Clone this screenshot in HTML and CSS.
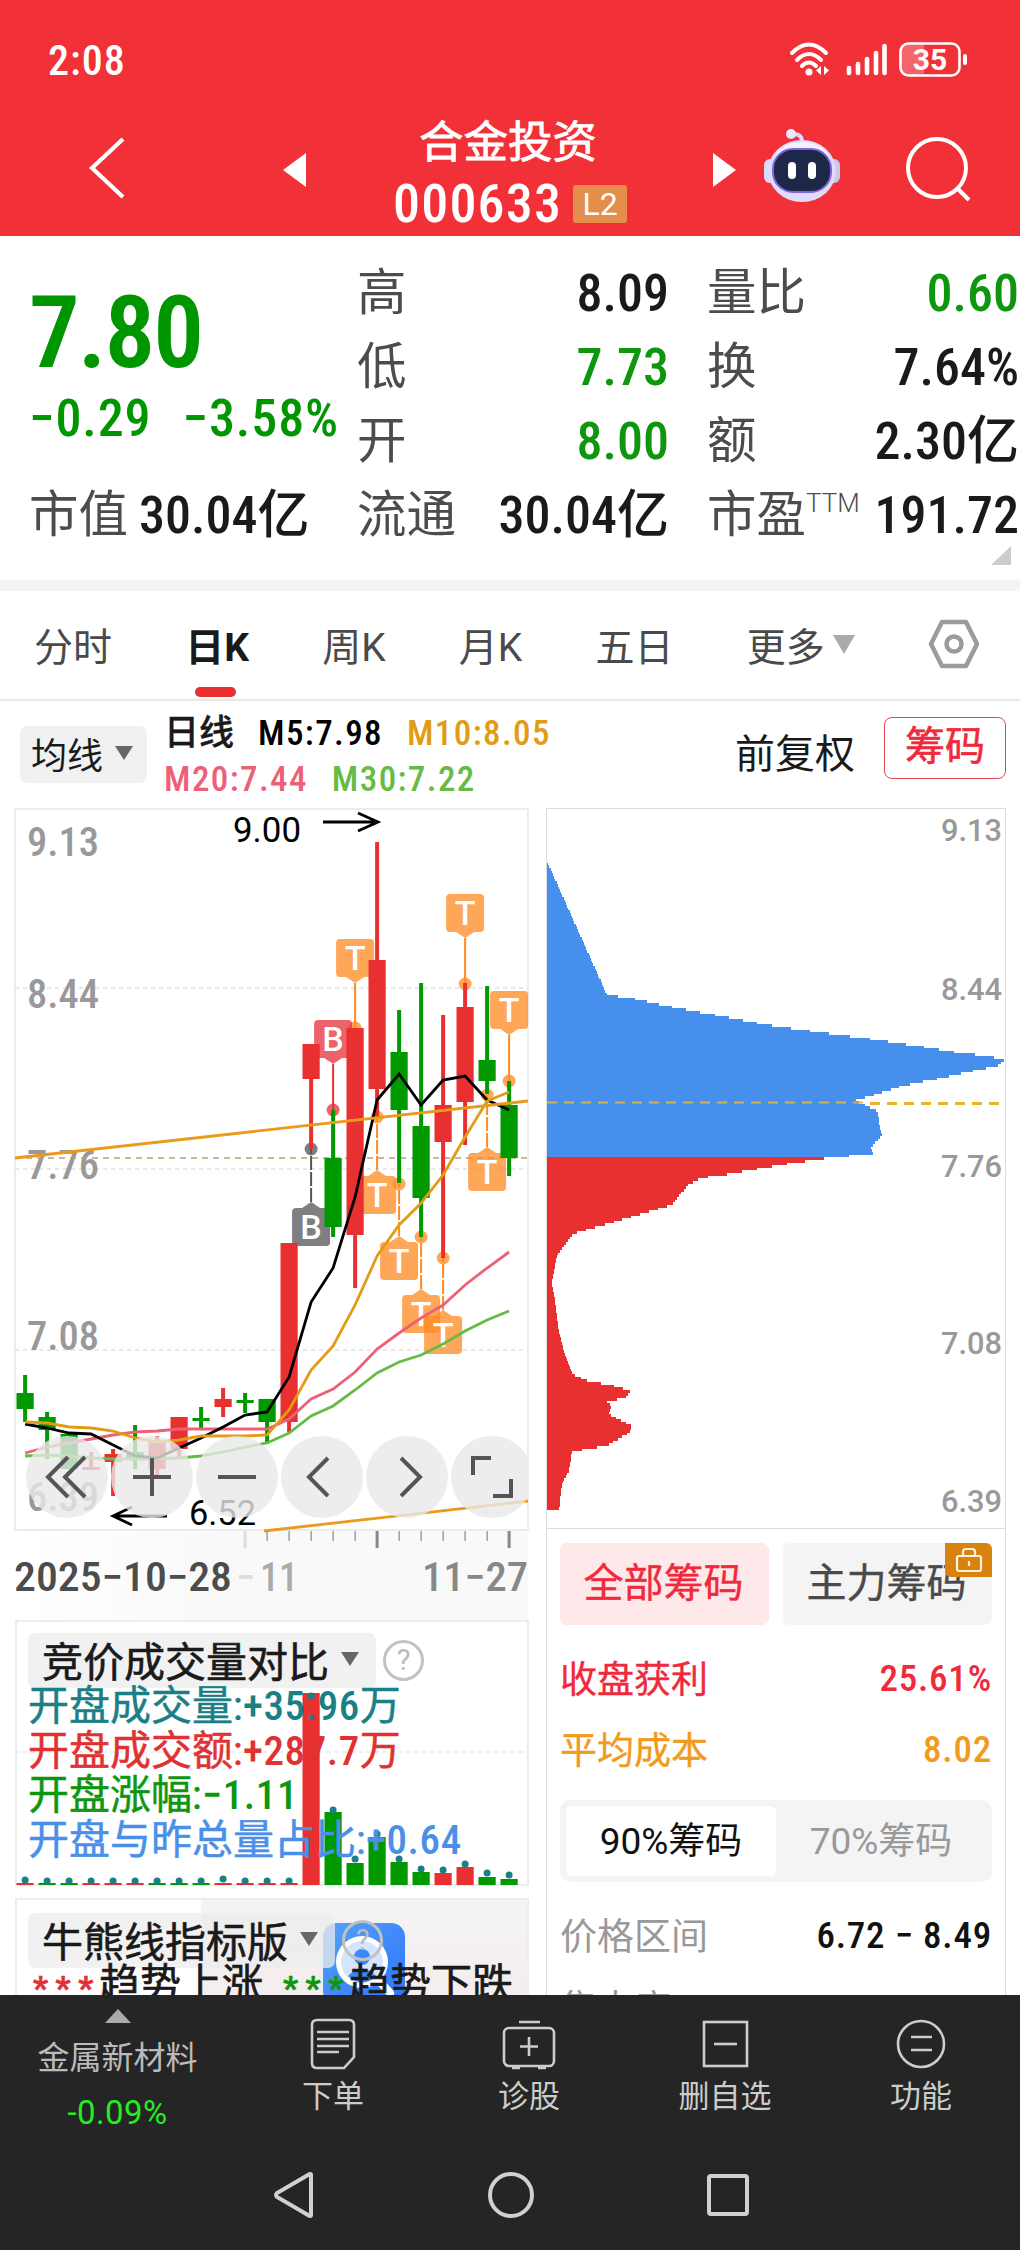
FILE: index.html
```
<!DOCTYPE html>
<html lang="zh-CN">
    <head>
        <title>合金投资 000633</title>
        <meta charset="UTF-8">
        <meta name="viewport" content="width=device-width, initial-scale=1.0">
        <link rel="stylesheet" href="styles.css">
    </head>
    <body>
        <div class="phone">
            <header class="header">
                <div class="statusbar">
                    <span class="clock">2:08</span>
                    <div class="status-icons">
                        <svg width="42" height="36" viewBox="0 0 42 36" fill="none" stroke="#fff" stroke-width="4" stroke-linecap="round">
                            <path d="M3 11Q20 -6 37 11M8 18Q20 6 32 18M13 24Q20 17 27 24"/>
                            <circle cx="20" cy="30" r="3.5" fill="#fff" stroke="none"/>
                            <path d="M32 24v9l-5-4.500zM35 24v9l5-4.500z" fill="#fff" stroke="none"/>
                        </svg>
                        <svg width="42" height="36" viewBox="0 0 42 36" stroke="#fff" stroke-width="4.600" stroke-linecap="round">
                            <path d="M3 26v5M12 22v9M21 17v14M30 11v20M38.500 4v27"/>
                        </svg>
                        <svg width="70" height="36" viewBox="0 0 70 36">
                            <path d="M9 1.500h16v32h-16q-7 0-7-7v-18q0-7 7-7z" fill="#fff" opacity=".25"/>
                            <rect x="1.500" y="1.500" width="59" height="32" rx="8" fill="none" stroke="#fff" stroke-width="2.600"/>
                            <rect x="64" y="12" width="4" height="11" rx="2" fill="#fff"/>
                            <text x="31" y="28" class="battery" text-anchor="middle">35</text>
                        </svg>
                    </div>
                </div>
                <div class="titlebar">
                    <svg class="back" width="40" height="62" viewBox="0 0 40 62"><path d="M35 2L4 31L35 60" fill="none" stroke="#fff" stroke-width="4.200"/></svg>
                    <svg class="prev" width="23" height="34" viewBox="0 0 23 34"><path d="M0 17L23 0V34z" fill="#fff"/></svg>
                    <div class="title">
                        <div class="stock-name">合金投资</div>
                        <div class="stock-code"><span class="code">000633</span><span class="level">L2</span></div>
                    </div>
                    <svg class="next" width="23" height="34" viewBox="0 0 23 34"><path d="M23 17L0 0V34z" fill="#fff"/></svg>
                    <svg class="robot" width="78" height="76" viewBox="0 0 78 76">
                        <path d="M29 6Q40 5 39 16" fill="none" stroke="#dcd6fb" stroke-width="4"/>
                        <circle cx="28" cy="6" r="5" fill="#ece9ff"/>
                        <rect x="1" y="31" width="12" height="24" rx="6" fill="#dcdafa"/>
                        <rect x="65" y="31" width="12" height="24" rx="6" fill="#c9c5f2"/>
                        <ellipse cx="39" cy="43" rx="34" ry="31" fill="#dedcfa"/>
                        <ellipse cx="39" cy="34" rx="28" ry="20" fill="#f3f1ff"/>
                        <rect x="10" y="21" width="58" height="43" rx="20" fill="#1d2747" stroke="#7f63d8" stroke-width="2"/>
                        <rect x="25" y="34" width="8" height="17" rx="4" fill="#fff"/>
                        <rect x="45" y="34" width="8" height="17" rx="4" fill="#fff"/>
                    </svg>
                    <svg class="search" width="68" height="68" viewBox="0 0 68 68" fill="none" stroke="#fff" stroke-width="4"><circle cx="33" cy="33" r="29"/><path d="M53 53L65 65"/></svg>
                </div>
            </header>

            <section class="quote">
                <div class="price-block">
                    <div class="price">7.80</div>
                    <div class="change"><span class="n">−0.29</span><span class="n">−3.58%</span></div>
                </div>
                <div class="cell"><label>高</label><b class="n">8.09</b></div>
                <div class="cell"><label>量比</label><b class="n green">0.60</b></div>
                <div class="cell"><label>低</label><b class="n green">7.73</b></div>
                <div class="cell"><label>换</label><b class="n">7.64%</b></div>
                <div class="cell"><label>开</label><b class="n green">8.00</b></div>
                <div class="cell"><label>额</label><b><span class="n">2.30</span>亿</b></div>
                <div class="cell first"><label>市值</label><b><span class="n">30.04</span>亿</b></div>
                <div class="cell"><label>流通</label><b><span class="n">30.04</span>亿</b></div>
                <div class="cell"><label>市盈<sup>TTM</sup></label><b class="n">191.72</b></div>
                <i class="corner"></i>
            </section>

            <nav class="tabs">
                <span>分时</span>
                <span class="on">日K</span>
                <span>周K</span>
                <span>月K</span>
                <span>五日</span>
                <span class="more">更多<i class="caret"></i></span>
                <svg width="52" height="50" viewBox="0 0 52 50" fill="none" stroke="#9b9b9b" stroke-width="4.500" stroke-linejoin="round"><path d="M14 3H38L49 25L38 47H14L3 25z"/><circle cx="26" cy="25" r="7.500"/></svg>
            </nav>

            <div class="ma-bar">
                <div class="chip ma-chip">均线<i class="caret dark"></i></div>
                <div class="ma-list">
                    <div class="ma-row"><span class="ma-name">日线</span><span class="ma m5">M5:7.98</span><span class="ma m10">M10:8.05</span></div>
                    <div class="ma-row"><span class="ma m20">M20:7.44</span><span class="ma m30">M30:7.22</span></div>
                </div>
                <span class="adjust">前复权</span>
                <span class="chips-btn">筹码</span>
            </div>

            <main class="main">
                <div class="left">
                    <div class="kline">
                        <svg id="kline" width="529" height="812" viewBox="0 808 529 812"></svg>
                        <div class="tools">
                            <button><svg viewBox="0 0 82 82"><path d="M42 21L22 41L42 61M59 21L39 41L59 61"/></svg></button>
                            <button><svg viewBox="0 0 82 82"><path d="M22 41H60M41 22V60"/></svg></button>
                            <button><svg viewBox="0 0 82 82"><path d="M22 41H60"/></svg></button>
                            <button><svg viewBox="0 0 82 82"><path d="M47 22L28 41L47 60"/></svg></button>
                            <button><svg viewBox="0 0 82 82"><path d="M35 22L54 41L35 60"/></svg></button>
                            <button><svg viewBox="0 0 82 82"><path d="M40 22H22V39M60 43V60H42"/></svg></button>
                        </div>
                    </div>
                    <div class="panel volume">
                        <svg id="volume" class="under" width="514" height="266" viewBox="15 1620 514 266"></svg>
                        <div class="panel-head"><div class="chip">竞价成交量对比<i class="caret dark"></i></div><i class="help">?</i></div>
                        <p class="teal">开盘成交量:<span>+35.96</span>万</p>
                        <p class="red">开盘成交额:<span>+287.7</span>万</p>
                        <p class="green">开盘涨幅:<span>−1.11</span></p>
                        <p class="blue">开盘与昨总量占比:<span>+0.64</span></p>
                    </div>
                    <div class="panel trend">
                        <div class="shade"></div>
                        <svg class="finder" width="82" height="82" viewBox="0 0 82 82">
                            <defs><linearGradient id="fg" x2="1" y2="1"><stop offset="0" stop-color="#57a2fb"/><stop offset="1" stop-color="#2d72f8"/></linearGradient></defs>
                            <rect width="82" height="82" rx="14" fill="url(#fg)"/>
                            <path d="M58 60L67 70" stroke="#fff" stroke-width="8" stroke-linecap="round"/>
                            <circle cx="39" cy="39" r="26" fill="#fff"/>
                            <circle cx="39" cy="39" r="21" fill="#d5e5fd"/>
                            <circle cx="39" cy="34" r="8" fill="#3d86fb"/>
                            <path d="M25 53Q39 38 53 53Q39 66 25 53" fill="#3d86fb"/>
                        </svg>
                        <div class="panel-head"><div class="chip">牛熊线指标版<i class="caret dark"></i></div><i class="help">?</i></div>
                        <div class="legend"><span class="stars red">***</span>趋势上涨<span class="stars green">***</span>趋势下跌</div>
                    </div>
                </div>

                <div class="right">
                    <svg id="profile" width="458" height="719" viewBox="547 809 458 719"></svg>
                    <div class="holders">
                        <div class="btns">
                            <span class="btn on">全部筹码</span>
                            <span class="btn">主力筹码
                                <i class="lock"><svg width="28" height="28" viewBox="0 0 28 28" fill="none" stroke="#fff3d9" stroke-width="2.200"><rect x="2" y="10" width="24" height="15" rx="2"/><path d="M8 10V6q0-3 3-3h6q3 0 3 3v4M14 15v5"/></svg></i>
                            </span>
                        </div>
                        <div class="row hot"><span>收盘获利</span><b>25.61%</b></div>
                        <div class="row warm"><span>平均成本</span><b>8.02</b></div>
                        <div class="segment"><span class="on">90%筹码</span><span>70%筹码</span></div>
                        <div class="row"><span>价格区间</span><b>6.72 − 8.49</b></div>
                        <div class="row last"><span>集中度</span><b>11.64%</b></div>
                    </div>
                </div>
            </main>

            <footer class="footer">
                <div class="actions">
                    <div class="sector"><i class="up"></i><span>金属新材料</span><b>-0.09%</b></div>
                    <div class="action">
                        <svg width="54" height="54" viewBox="0 0 54 54"><path d="M11 3H43Q48 3 48 8V40L38 51H11Q6 51 6 46V8Q6 3 11 3zM11 15H43M11 22H43M11 29H43M11 35H33"/></svg>
                        <span>下单</span>
                    </div>
                    <div class="action">
                        <svg width="54" height="54" viewBox="0 0 54 54"><rect x="2" y="11" width="50" height="38" rx="5"/><path d="M17 5H38M10 51H18M36 51H44M27 20V39M18 29.500H36"/></svg>
                        <span>诊股</span>
                    </div>
                    <div class="action">
                        <svg width="54" height="54" viewBox="0 0 54 54"><rect x="6" y="5" width="43" height="44"/><path d="M16 27H39"/></svg>
                        <span>删自选</span>
                    </div>
                    <div class="action">
                        <svg width="54" height="54" viewBox="0 0 54 54"><circle cx="27" cy="27" r="23"/><path d="M17 20H38M17 33H38"/></svg>
                        <span>功能</span>
                    </div>
                </div>
                <div class="sysnav">
                    <svg width="48" height="48" viewBox="0 0 48 48"><path d="M41 4V44Q41 46 38 44L7 26Q5 24 7 22L38 4Q41 2 41 4z"/></svg>
                    <svg width="48" height="48" viewBox="0 0 48 48"><circle cx="24" cy="24" r="21"/></svg>
                    <svg width="48" height="48" viewBox="0 0 48 48"><rect x="5" y="5" width="38" height="38" rx="2"/></svg>
                </div>
            </footer>
        </div>
        <script src="script.js"></script>
    </body>
</html>
```
FILE: styles.css
```
*{box-sizing:border-box;}

body{
    margin:0;
    background:#fff;
    font-family:Roboto, "Noto Sans CJK SC", sans-serif;
    color:#1a1a1a;
}

i{font-style:normal;}
b{font-weight:500;}
p{margin:0;}
svg{display:block; flex:none;}

.phone{
    width:1020px; height:2250px;
    overflow:hidden;
    display:flex;
    flex-direction:column;
}

.n{font-stretch:87%;}

.green{color:#0f960f;}
.red{color:#e03232;}

/* header */
.header{height:236px; flex:none; background:#f13038; color:#fff;}

.statusbar{
    display:flex;
    justify-content:space-between;
    align-items:center;
    height:84px;
    padding:36px 51px 0 48px;
}

.clock{font-size:42px; font-weight:500; font-stretch:87%; letter-spacing:1px;}
.status-icons{display:flex; gap:15px;}
.status-icons svg:last-child{margin-left:-4px;}
.battery{font-size:30px; font-weight:700; fill:#fff;}

.titlebar{display:flex; align-items:flex-start; height:152px;}
.back{margin:53px 0 0 88px;}
.prev{margin:69px 0 0 155px;}
.title{width:300px; margin:28px 0 0 54px;}
.next{margin:69px 0 0 53px;}
.robot{margin:44px 0 0 27px;}
.search{margin:51px 0 0 63px;}

.stock-name{
    padding-left:59px;
    font-size:44.500px; line-height:62px;
    -webkit-text-stroke:.8px #fff;
}

.stock-code{
    display:flex;
    align-items:center;
    gap:12px;
    padding-left:33px;
    font-size:54px; line-height:60px;
    font-weight:500;
}

.code{width:168px; font-stretch:87%; letter-spacing:1.200px;}

.level{
    width:54px; height:38px;
    background:#e38e4b;
    font-size:32px; line-height:38px;
    font-weight:400;
    text-align:center;
    border-radius:3px;
}

/* quote */
.quote{
    position:relative;
    height:355px;
    flex:none;
    display:grid;
    grid-template-columns:290px 312px 312px;
    grid-template-rows:repeat(4, 74px);
    column-gap:38px;
    padding:20px 1px 0 29px;
    border-bottom:11px solid #f4f4f4;
}

.price-block{grid-row:1 / 4; color:#009600;}
.price{font-size:101px; line-height:120px; margin-top:17px; font-weight:600; font-stretch:87%; letter-spacing:-2px;}
.change{display:flex; gap:31px; font-size:52px; line-height:52px; font-weight:500; letter-spacing:.900px; white-space:nowrap;}
.cell{display:flex; justify-content:space-between; align-items:center; font-size:49.500px; line-height:74px; white-space:nowrap;}
.cell label{color:#4c4c4c;}
.cell b{font-size:52px; padding-top:2px;}
.cell.first{justify-content:flex-start; gap:11px;}
.cell sup{font-size:26px; line-height:0; vertical-align:20px; font-weight:300;}

.corner{
    position:absolute;
    right:9px; bottom:15px;
    border-left:20px solid transparent;
    border-bottom:19px solid #ccc;
}

/* tabs */
.tabs{
    display:flex;
    align-items:center;
    height:110px;
    flex:none;
    padding:0 40px 2px 34px;
    justify-content:space-between;
    border-bottom:2px solid #e8e8e8;
    font-size:39px;
    color:#4a4a4a;
}

.tabs .on{position:relative; color:#1a1a1a; font-weight:700;}

.tabs .on::after{
    content:"";
    position:absolute;
    left:10px; bottom:-25px;
    width:41px; height:10px;
    border-radius:5px;
    background:#e83030;
}

.caret{
    display:inline-block;
    border:11px solid transparent;
    border-top:19px solid #aaa;
    border-bottom:0;
}

.more{display:flex; align-items:center; gap:8px;}

.caret.dark{border-width:14px 9.500px 0; border-top-color:#666;}

/* moving averages */
.ma-bar{display:flex; align-items:center; height:107px; flex:none; padding:0 14px 0 20px;}

.chip{
    display:flex;
    align-items:center;
    gap:12px;
    border-radius:7px;
    background:rgba(236,236,236,.75);
}

.ma-chip{width:127px; height:57px; padding:0 0 3px 11px; font-size:36px;}
.ma-list{padding:4px 0 0 17px; font-size:35px; font-weight:500; line-height:46px;}
.ma-row{display:flex; gap:24px;}
.ma{font-stretch:87%; letter-spacing:1.400px;}
.ma-name{-webkit-text-stroke:.4px #1a1a1a;}
.m5{color:#000;}
.m10{color:#e29c14;}
.m20{color:#ee6078;}
.m30{color:#66bb45;}
.adjust{margin:-7px 29px 0 auto; font-size:40px;}

.chips-btn{
    width:122px; height:62px;
    margin-top:-14px;
    border:1.500px solid #e04450;
    border-radius:8px;
    color:#f02a3c;
    font-size:40px; line-height:58px;
    text-align:center;
    -webkit-text-stroke:.6px #f02a3c;
}

/* charts */
.main{display:flex; height:1187px; flex:none; overflow:hidden;}
.left{width:546px; flex:none;}
.kline{position:relative; width:529px; height:812px;}

.tools{
    position:absolute;
    left:26px; top:628px;
    width:502px;
    display:flex;
    gap:3px;
    overflow:hidden;
}

.tools button{
    width:82px; height:82px;
    flex:none;
    padding:0;
    border:0;
    border-radius:50%;
    background:rgba(232,232,232,.8);
}

.tools svg{fill:none; stroke:#555; stroke-width:4;}

.axis-label{font-size:40px; font-weight:500; font-stretch:87%; fill:#999;}
.side-label{font-size:32px; font-weight:500; fill:#999;}
.mark{font-size:35px; font-weight:400; fill:#000;}
.flag{font-size:34px; font-weight:500; fill:#fff;}

.panel{position:relative; width:514px; margin-left:15px; border:2px solid #ededed;}
.volume{height:266px; padding-top:11px;}
.under{position:absolute; left:-2px; top:-2px;}
.panel-head{position:relative; display:flex; align-items:center; gap:7px; margin-left:11px;}

.panel-head .chip{
    height:55px;
    padding:0 17px 4px 14px;
    font-size:41px;
    -webkit-text-stroke:.6px #1a1a1a;
}

.help{
    width:41px; height:41px;
    border:3px solid #c2c2c2;
    border-radius:50%;
    color:#bbb;
    font-size:29px; line-height:35px;
    text-align:center;
}

.volume p{
    position:relative;
    margin-left:11px;
    font-size:41px; line-height:44.700px;
    white-space:nowrap;
    -webkit-text-stroke:.5px currentColor;
}

.volume p:nth-of-type(1){margin-top:-4px;}
.volume p span{font-weight:500; font-stretch:87%; letter-spacing:.600px; -webkit-text-stroke:0;}
.teal{color:#1b7f86;}
.blue{color:#4a8fe8;}

.trend{height:130px; margin-top:12px; padding-top:13px;}

.shade{
    position:absolute;
    left:184px; top:0; right:0; bottom:0;
    background:linear-gradient(#f4f4f4, #f5eaec);
}

.finder{position:absolute; left:306px; top:23px;}

.legend{
    position:relative;
    display:flex;
    margin-left:16px;
    font-size:41px; line-height:44px;
    margin-top:-6px;
    white-space:nowrap;
    -webkit-text-stroke:.7px currentColor;
}

.stars{width:66px; font-size:34px; font-weight:500; letter-spacing:7.500px; line-height:52px; height:44px;}
.stars.green{margin-left:20px;}

/* chip distribution */
.right{width:460px; height:1240px; border:1px solid #ddd;}
.holders{border-top:1px solid #ddd; padding:14px 13px 0; font-size:37px;}
.btns{display:flex; gap:14px;}

.btn{
    position:relative;
    width:209px; height:82px;
    padding-right:2px;
    border-radius:7px;
    background:#f4f4f4;
    color:#4a4a4a;
    font-size:40px; line-height:81px;
    text-align:center;
    -webkit-text-stroke:.4px currentColor;
}

.btn.on{background:#ffe8e9; color:#f02a3c;}

.lock{
    position:absolute;
    right:0; top:0;
    width:47px; height:34px;
    padding:3px 10px;
    border-radius:0 6px 0 6px;
    background:#d9820f;
}

.row{display:flex; justify-content:space-between; align-items:center; height:71px; color:#999; white-space:nowrap;}
.row b{padding-top:3px; color:#111; font-stretch:87%; letter-spacing:.800px;}
.hot{margin-top:16px;}
.hot, .hot b{color:#f02a3c;}
.warm, .warm b{color:#f29a1b;}
.hot span, .warm span{-webkit-text-stroke:.4px currentColor;}
.row.last{margin-top:1px;}
.row.last b{padding-top:9px;}

.segment{
    display:flex;
    height:82px;
    margin:17px 0 16px;
    padding:6px;
    border-radius:10px;
    background:#f4f4f4;
    color:#999;
}

.segment span{flex:1; line-height:71px; text-align:center;}
.segment .on{background:#fff; border-radius:6px; color:#111;}

/* footer */
.footer{flex:1; background:#252525; color:#ccc;}
.actions{display:flex; height:146px;}
.sector{width:235px; display:flex; flex-direction:column; align-items:center; padding-top:14px; color:#bbb; font-size:32px;}
.sector span{line-height:50px; margin-top:10px;}
.sector b{color:#22ee22; font-weight:400; font-size:33px; line-height:50px; margin-top:5px; letter-spacing:.400px;}
.up{border:13px solid transparent; border-bottom:14px solid #aaa; border-top:0;}
.action{width:196px; display:flex; flex-direction:column; align-items:center; padding-top:22px; font-size:31px; line-height:52px;}
.action svg{fill:none; stroke:#ccc; stroke-width:2.600;}
.sysnav{display:flex; padding:30px 0 0 270px; gap:169px;}
.sysnav svg{fill:none; stroke:#d0d0d0; stroke-width:4;}
```
FILE: script.js
```
var UP = "#e83030";
var DOWN = "#009900";
var STEP = 22;

// colour, high, body top, body bottom, low
var candles = [
    ["g",1375,1393,1409,1422], ["g",1412,1417,1430,1459], ["g",1432,1434,1469,1469],
    ["r",1452,1467,1470,1470], ["r",1449,1454,1462,1496], ["g",1425,1452,1460,1469],
    ["r",1436,1441,1469,1477], ["r",1417,1417,1449,1457], ["g",1407,1418,1421,1428],
    ["r",1388,1399,1407,1417], ["g",1393,1400,1403,1413], ["g",1399,1399,1422,1443],
    ["r",1243,1243,1422,1432], ["r",1044,1044,1079,1149], ["g",1110,1158,1227,1237],
    ["r",1028,1028,1235,1288], ["r",842,960,1089,1117], ["g",1010,1052,1110,1183],
    ["g",983,1126,1198,1237], ["r",1015,1105,1142,1258], ["r",983,1007,1102,1145],
    ["g",986,1060,1081,1094], ["g",1081,1105,1158,1176]
];

// candle index, letter, colour, box top, dot
var flags = [
    [15,"T","#ff8a22",939,1028], [14,"B","#e83038",1020,1110], [20,"T","#ff8a22",894,984],
    [22,"T","#ff8a22",991,1081], [13,"B","#555555",1208,1149], [16,"T","#ff8a22",1176,1117],
    [17,"T","#ff8a22",1242,1184], [18,"T","#ff8a22",1295,1237], [19,"T","#ff8a22",1316,1258],
    [21,"T","#ff8a22",1153,1095]
];

var averages = {
    "#ee6078": [1453,1447,1443,1439,1435,1432,1431,1429,1429,1429,1429,1429,1419,1399,1389,1372,1349,1333,1318,1305,1285,1268,1252],
    "#66bb45": [1456,1455,1456,1458,1459,1459,1459,1458,1456,1452,1447,1443,1433,1416,1406,1390,1373,1362,1355,1344,1331,1320,1311],
    "#000000": [1424,1428,1433,1434,1445,1456,1458,1448,1438,1427,1415,1412,1377,1302,1268,1197,1100,1074,1105,1080,1076,1100,1110],
    "#e29c14": [1422,1423,1427,1428,1431,1438,1442,1440,1436,1436,1436,1435,1410,1370,1346,1305,1256,1225,1203,1175,1137,1101,1092]
};

// colour, bar top, dot
var volumes = [
    ["r",1883,1880], ["g",1883,1881], ["g",1883,1881], ["r",1883,1881], ["r",1883,1881],
    ["r",1883,1881], ["g",1883,1881], ["g",1883,1881], ["g",1883,1881], ["r",1883,1879],
    ["r",1883,1881], ["r",1883,1881], ["r",1883,1881], ["r",1693,1696], ["g",1812,1810],
    ["g",1863,1859], ["g",1837,1834], ["g",1862,1859], ["g",1872,1869], ["r",1873,1870],
    ["r",1867,1864], ["g",1877,1873], ["g",1879,1875]
];

// outline of the chip distribution: price position, width
var outline = [
    [860,0], [993.5,60], [997,84], [1006,126], [1016,180], [1024,223], [1031,273], [1038,326],
    [1046,380], [1051,408], [1055,441], [1058,458], [1064,451], [1069,428], [1077,391],
    [1084,356], [1095,321], [1099,307], [1103,316], [1110,331], [1123,332], [1133,335],
    [1146,324], [1152,326], [1155,292], [1157,275], [1162,241], [1168,206], [1174,173],
    [1176,155], [1183,141], [1203,125], [1213,91], [1223,58], [1232,26], [1253,10], [1281,5],
    [1307,9], [1331,12], [1357,19], [1373,26], [1379,38], [1385,69], [1390,83], [1396,79],
    [1400,60], [1405,64], [1413,62], [1420,76], [1425,85], [1431,83], [1438,70], [1444,60],
    [1450,25], [1469,22], [1482,15], [1509,12]
];

function x(i)
{
    return 25.1 + STEP * i;
}

function color(c)
{
    return c === "r" ? UP : DOWN;
}

function rect(x, y, w, h, fill)
{
    return '<rect x="' + x + '" y="' + y + '" width="' + w + '" height="' + h + '" fill="' + fill + '"/>';
}

function path(d, stroke, width, extra)
{
    return '<path d="' + d + '" fill="none" stroke="' + stroke + '" stroke-width="' + width + '" ' + (extra || "") + '/>';
}

function label(x, y, text, cls, length, extra)
{
    return '<text x="' + x + '" y="' + y + '" class="' + cls + '" textLength="' + length
        + '" lengthAdjust="spacingAndGlyphs" ' + (extra || "") + '>' + text + '</text>';
}

function flag(f)
{
    var cx = x(f[0]), top = f[3], dot = f[4];
    var above = top < dot;
    var edge = above ? top + 38 : top;
    var tip = above ? edge + 6 : edge - 6;
    var s = path("M" + cx + " " + tip + "V" + dot, f[2], 2, above ? "" : 'stroke-dasharray="14 2"');
    s += '<g opacity=".75"><path d="M' + (cx - 9) + " " + edge + "L" + cx + " " + tip + "L" + (cx + 9) + " " + edge + 'z" fill="' + f[2] + '"/>';
    s += '<rect x="' + (cx - 19) + '" y="' + top + '" width="38" height="38" rx="4" fill="' + f[2] + '"/>';
    s += '<circle cx="' + cx + '" cy="' + dot + '" r="6.500" fill="' + f[2] + '"/></g>';
    s += '<text x="' + cx + '" y="' + (top + 31) + '" class="flag" text-anchor="middle">' + f[1] + "</text>";
    return s;
}

function drawKline()
{
    var s = '<defs><linearGradient id="haze"><stop offset="0" stop-color="#fff"/><stop offset=".4" stop-color="#f9f9f9"/><stop offset="1" stop-color="#f9f9f9"/></linearGradient></defs>';
    s += rect(15, 1531, 513, 89, "url(#haze)");
    s += '<rect x="15" y="809" width="513" height="721" fill="#fff" stroke="#ececec" stroke-width="2"/>';
    [988, 1169, 1350].forEach(function(y){
        s += path("M15 " + y + "H528", "#e8e8e8", 2, 'stroke-dasharray="4 4"');
    });
    [["9.13",856], ["8.44",1008], ["7.76",1179], ["7.08",1350], ["6.39",1511]].forEach(function(l){
        s += label(27, l[1], l[0], "axis-label", 72);
    });
    s += path("M15 1158H528", "#b9a376", 1.6, 'stroke-dasharray="6 5"');

    flags.forEach(function(f){ s += flag(f); });

    candles.forEach(function(c, i){
        s += rect(x(i) - 2, c[1], 4, c[4] - c[1], color(c[0]));
        s += rect(x(i) - 8.6, c[2], 17.2, c[3] - c[2], color(c[0]));
    });

    for(var k in averages)
    {
        var pts = averages[k].map(function(y, i){ return x(i) + " " + y; });
        s += path("M" + pts.join("L"), k, 2.8);
    }
    s += path("M15 1158L528 1101M264 1531L528 1501", "#eb9a1c", 2.8);

    s += label(233, 842, "9.00", "mark", 68);
    s += path("M323 822H377M358 813L378 822L358 831", "#000", 2.8);
    s += label(189, 1525, "6.52", "mark", 67);
    s += path("M167 1516H114M132 1507L113 1516L132 1525", "#000", 2.8);

    for(var i = 10; i < 23; i++)
    {
        var big = (i - 10) % 6 === 0;
        s += path("M" + x(i) + " 1531V" + (big ? 1548 : 1541), i === 10 ? "#ddd" : "#888", big ? 3 : 1.2);
    }
    s += label(14, 1591, "2025−10−28", "axis-label", 218, 'style="fill:#4c4c4c"');
    s += label(236, 1591, "−", "axis-label", 19, 'style="fill:#ddd"');
    s += label(260, 1591, "11", "axis-label", 38, 'style="fill:#aaa"');
    s += label(422, 1591, "11−27", "axis-label", 106, 'style="fill:#888"');
    document.getElementById("kline").innerHTML = s;
}

function drawVolume()
{
    var s = path("M15 1752H528", "#ddd", 1.2, 'stroke-dasharray="4 4"');
    volumes.forEach(function(v, i){
        s += rect(x(i) - 8.6, v[1], 17.2, 1885 - v[1], color(v[0]));
        s += '<circle cx="' + x(i) + '" cy="' + v[2] + '" r="3.500" fill="#1b7f86"/>';
    });
    document.getElementById("volume").innerHTML = s;
}

function drawProfile()
{
    var s = "", j = 0, h = 2.65;
    for(var y = 860; y < 1509; y += h)
    {
        while(j < outline.length - 2 && outline[j + 1][0] < y)
            j++;
        var a = outline[j], b = outline[j + 1];
        var w = a[1] + (b[1] - a[1]) * (y - a[0]) / (b[0] - a[0]);
        s += rect(547, y, Math.max(w, 0), h + .4, y < 1154.5 ? "#468fec" : UP);
    }
    s = '<g shape-rendering="crispEdges">' + s + "</g>";
    s += path("M547 1102.500H865", "#dcae55", 2, 'stroke-dasharray="10 7"');
    s += path("M870 1103.500H1000", "#edb12c", 3, 'stroke-dasharray="10 7"');
    [["9.13",841], ["8.44",1000], ["7.76",1177], ["7.08",1354], ["6.39",1512]].forEach(function(l){
        s += label(941, l[1], l[0], "side-label", 61);
    });
    document.getElementById("profile").innerHTML = s;
}

drawKline();
drawVolume();
drawProfile();
```
